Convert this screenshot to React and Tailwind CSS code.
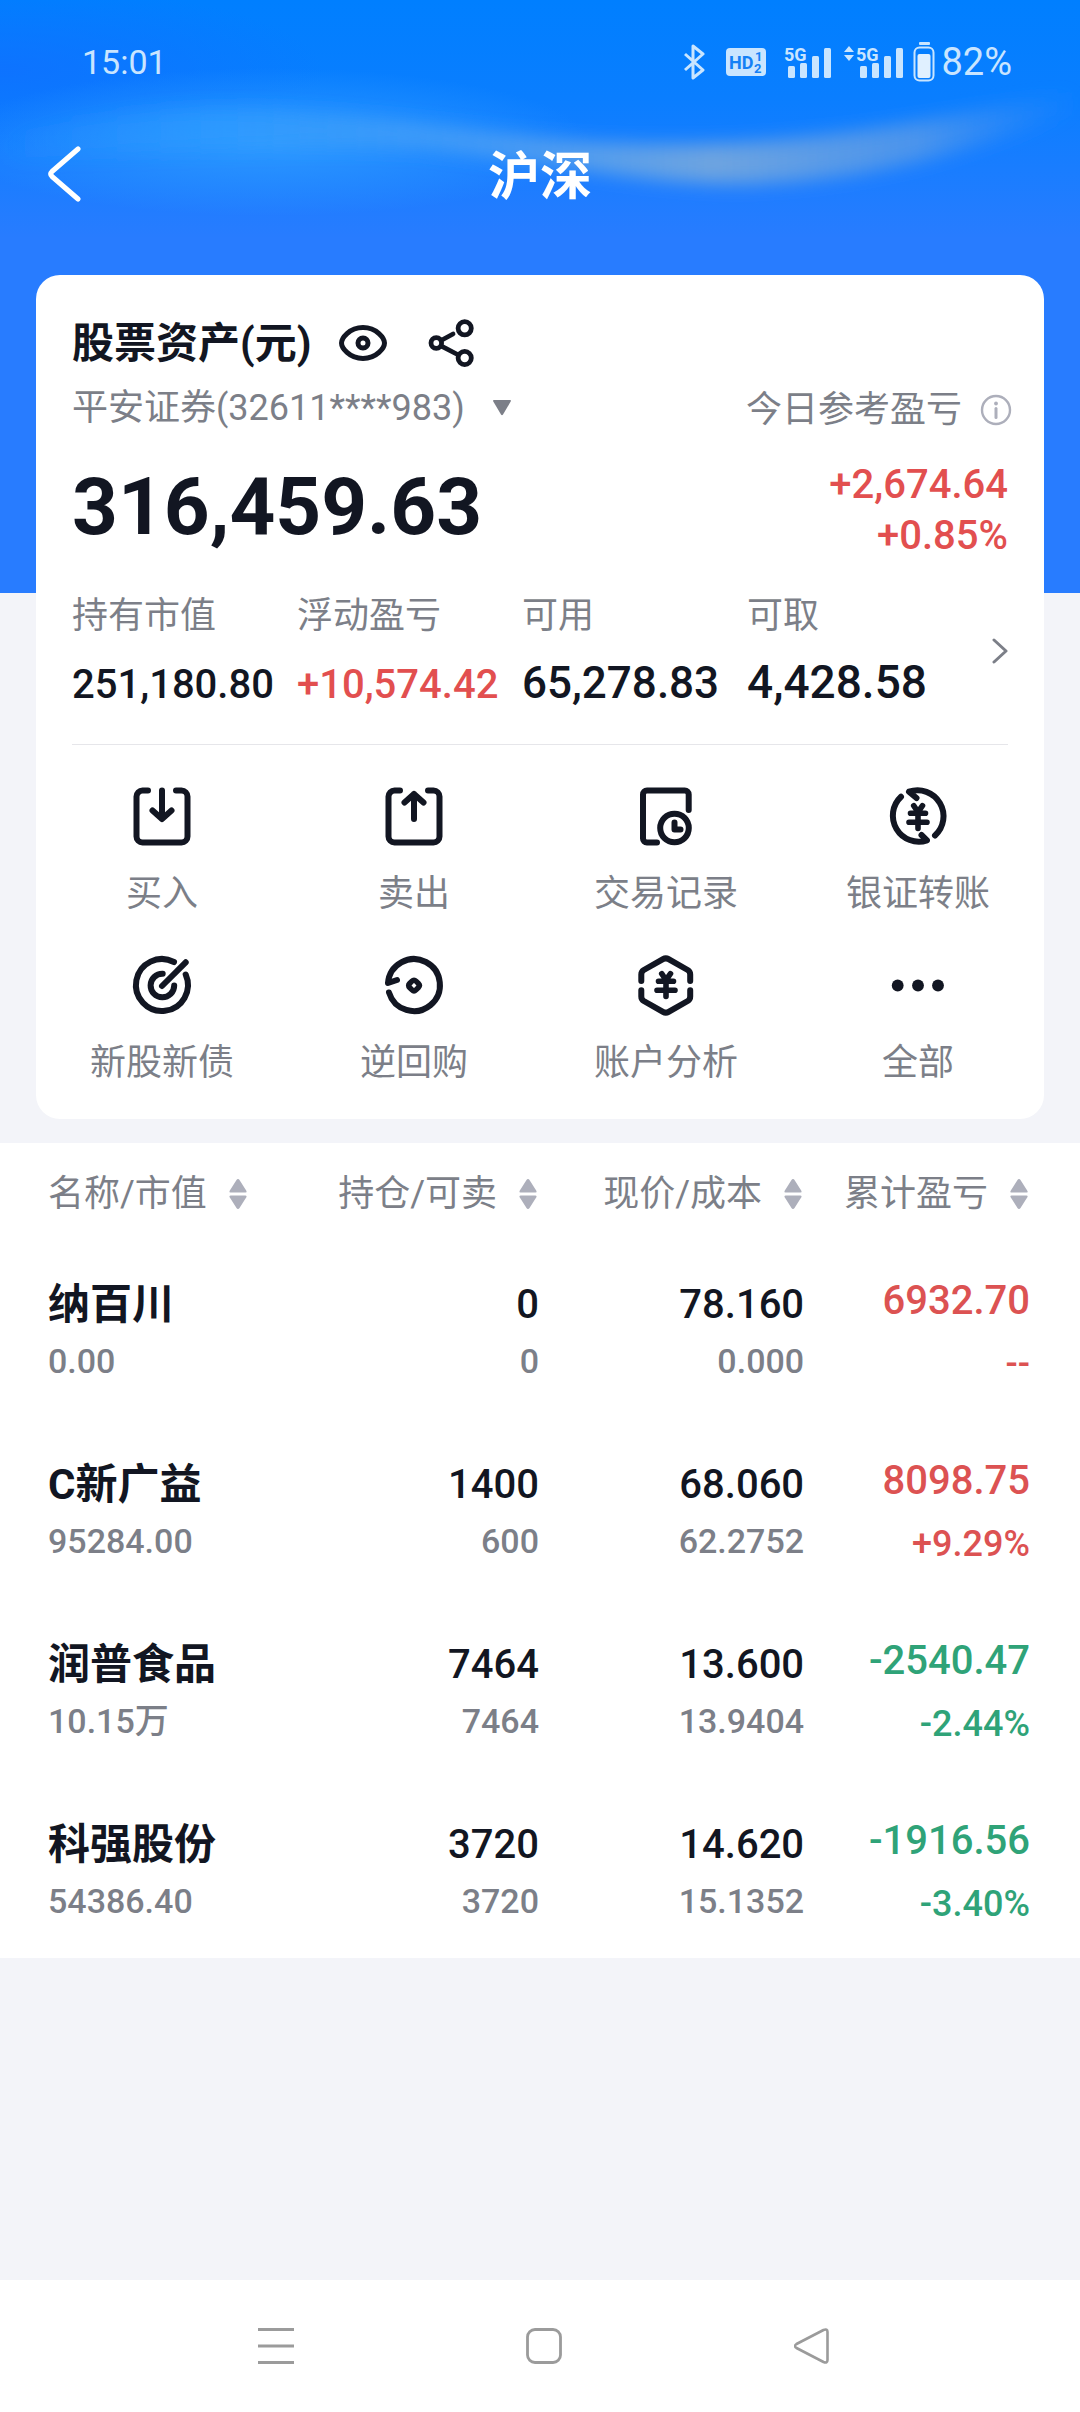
const stats = [
  { label: "持有市值", value: "251,180.80", className: "text-[40px] leading-[54px] text-[#121622]" },
  { label: "浮动盈亏", value: "+10,574.42", className: "text-[40px] leading-[54px] text-[#e24f4f]" },
  { label: "可用", value: "65,278.83", className: "text-[44px] leading-[50px] text-[#121622]" },
  { label: "可取", value: "4,428.58", className: "text-[46px] leading-[48px] text-[#121622]" },
];

const actions = [
  { label: "买入", icon: <BuyIcon /> },
  { label: "卖出", icon: <SellIcon /> },
  { label: "交易记录", icon: <RecordIcon /> },
  { label: "银证转账", icon: <TransferIcon /> },
  { label: "新股新债", icon: <TargetIcon /> },
  { label: "逆回购", icon: <RepoIcon /> },
  { label: "账户分析", icon: <AnalysisIcon /> },
  { label: "全部", icon: <MoreIcon /> },
];

const columns = [
  { label: "名称/市值", width: "w-[24%]" },
  { label: "持仓/可卖", width: "w-[26%]" },
  { label: "现价/成本", width: "w-[27%]" },
  { label: "累计盈亏", width: "w-[23%]" },
];

const holdings = [
  { name: "纳百川", value: "0.00", held: "0", sellable: "0", price: "78.160", cost: "0.000", profit: "6932.70", rate: "--", up: true },
  { name: "C新广益", value: "95284.00", held: "1400", sellable: "600", price: "68.060", cost: "62.2752", profit: "8098.75", rate: "+9.29%", up: true },
  { name: "润普食品", value: "10.15万", held: "7464", sellable: "7464", price: "13.600", cost: "13.9404", profit: "-2540.47", rate: "-2.44%", up: false },
  { name: "科强股份", value: "54386.40", held: "3720", sellable: "3720", price: "14.620", cost: "15.1352", profit: "-1916.56", rate: "-3.40%", up: false },
];

function ActionSvg({ children }) {
  return (
    <svg
      viewBox="0 0 60 60"
      className="size-[60px] overflow-visible"
      fill="none"
      stroke="#121622"
      strokeWidth="6"
      strokeLinecap="round"
      strokeLinejoin="round"
      aria-hidden="true"
    >
      {children}
    </svg>
  );
}

const trayPath = "M16 4.5H10.5a6 6 0 0 0-6 6V50.5a6 6 0 0 0 6 6H49.5a6 6 0 0 0 6-6V10.5a6 6 0 0 0-6-6H44";

function BuyIcon() {
  return (
    <ActionSvg>
      <path d={trayPath} />
      <path d="M30 4.5V32M20.5 24.5L30 33L39.5 24.5" />
    </ActionSvg>
  );
}

function SellIcon() {
  return (
    <ActionSvg>
      <path d={trayPath} />
      <path d="M30 33V8M20.5 16.5L30 8L39.5 16.5" />
    </ActionSvg>
  );
}

function RecordIcon() {
  return (
    <ActionSvg>
      <path d="M52.7 24V8.5a4 4 0 0 0-4-4H11a4 4 0 0 0-4 4V52.5a4 4 0 0 0 4 4H21" />
      <circle cx="38.5" cy="42" r="14.3" />
      <path d="M38.5 36.5V43.5H44.5" />
    </ActionSvg>
  );
}

function YenMark() {
  return <path d="M25.7 19.7L30 26L34.5 19.7M22.5 27.3H37.5M21 36.3H39M30 26V42.5" strokeWidth="5.6" />;
}

function TransferIcon() {
  return (
    <ActionSvg>
      <path d="M13 10.7A26 26 0 0 0 39 54.3L33.5 49" />
      <path d="M28.5 12L21 5.7A26 26 0 0 1 47 49.5" />
      <YenMark />
    </ActionSvg>
  );
}

function TargetIcon() {
  return (
    <ActionSvg>
      <path d="M42 7A26 26 0 1 0 53.7 19.5" />
      <path d="M30.7 18.7A11.8 11.8 0 1 0 42.2 30.5" />
      <path d="M30 31L53.7 7.3" />
    </ActionSvg>
  );
}

function RepoIcon() {
  return (
    <ActionSvg>
      <path d="M5 37.5A26 26 0 1 0 4 28L13 25" />
      <path d="M25.6 32.5Q23.6 30.5 25.6 28.5L28 26.1Q30 24.1 32 26.1L34.4 28.5Q36.400 30.5 34.4 32.5L32 34.9Q30 36.9 28 34.9Z" strokeWidth="5.4" />
    </ActionSvg>
  );
}

function AnalysisIcon() {
  return (
    <ActionSvg>
      <path d="M5.300 26V19.5q0-3 2.5-4.5L27 4.2q2.8-1.6 5.6 0L51.7 15q2.5 1.5 2.5 4.5V26" />
      <path d="M5.300 35.2V41.5q0 3 2.5 4.5L27 56.8q2.8 1.6 5.6 0L51.7 46q2.5-1.5 2.5-4.5V35.2" />
      <g transform="translate(0 -1)">
        <YenMark />
      </g>
    </ActionSvg>
  );
}

function MoreIcon() {
  return (
    <ActionSvg>
      <g fill="#121622" stroke="none">
        <circle cx="9.7" cy="30.5" r="5.9" />
        <circle cx="30" cy="30.5" r="5.9" />
        <circle cx="50" cy="30.5" r="5.9" />
      </g>
    </ActionSvg>
  );
}

function SignalBars() {
  return (
    <svg viewBox="0 0 48 36" className="h-9 w-12" fill="#c9e5ff" aria-hidden="true">
      <text x="1" y="17" fontSize="18" fontWeight="700">5G</text>
      <rect x="5" y="22" width="7" height="12" rx="1.5" />
      <rect x="17" y="19" width="7" height="15" rx="1.5" />
      <rect x="29" y="12" width="7" height="22" rx="1.5" />
      <rect x="41" y="4" width="7" height="30" rx="1.5" />
    </svg>
  );
}

function StatusBar() {
  return (
    <div className="relative flex h-[124px] items-center justify-between pr-[68px] pl-[82px] text-[#c9e5ff]">
      <span className="text-[34px]">15:01</span>
      <div className="flex items-center">
        <svg viewBox="0 0 22 36" className="h-9 w-[22px]" fill="none" stroke="#c9e5ff" strokeWidth="3" strokeLinejoin="round" aria-hidden="true">
          <path d="M2 10L20 26L10 34V2L20 10L2 26" />
        </svg>
        <svg viewBox="0 0 40 28" className="ml-[21px] h-7 w-10" aria-hidden="true">
          <rect width="40" height="28" rx="4" fill="#c9e5ff" />
          <g fill="#1480f5" fontWeight="700">
            <text x="3" y="21" fontSize="18">HD</text>
            <text x="29" y="13" fontSize="13">1</text>
            <text x="28" y="25" fontSize="13">2</text>
          </g>
        </svg>
        <div className="ml-[17px]"><SignalBars /></div>
        <svg viewBox="0 0 12 34" className="ml-3 h-[34px] w-3" fill="#c9e5ff" aria-hidden="true">
          <path d="M6 1L11 7H1ZM6 16L1 10H11Z" />
        </svg>
        <SignalBars />
        <svg viewBox="0 0 22 40" className="ml-[10px] h-10 w-[22px]" aria-hidden="true">
          <rect x="6" y="0" width="11" height="3" rx="1" fill="#c9e5ff" />
          <rect x="1.5" y="5.5" width="19" height="33" rx="5" fill="none" stroke="#c9e5ff" strokeWidth="2" />
          <rect x="4.5" y="12" width="13" height="24" rx="2" fill="#e0f0ff" />
        </svg>
        <span className="ml-[6px] text-[38px]">82%</span>
      </div>
    </div>
  );
}

function HeaderGlow() {
  return (
    <svg viewBox="0 0 1080 280" preserveAspectRatio="none" className="absolute inset-x-0 top-0 h-[280px] w-full" aria-hidden="true">
      <defs>
        <linearGradient id="sky" x1="0" y1="0" x2="0" y2="1">
          <stop offset="0" stopColor="#007fff" />
          <stop offset="0.35" stopColor="#0a7eff" />
          <stop offset="0.85" stopColor="#287cff" />
        </linearGradient>
        <radialGradient id="corner" cx="0" cy="0.25" r="0.3">
          <stop offset="0" stopColor="#0f70ff" stopOpacity="0.8" />
          <stop offset="1" stopColor="#0f70ff" stopOpacity="0" />
        </radialGradient>
        <radialGradient id="pool">
          <stop offset="0" stopColor="#2f9cff" stopOpacity="0.9" />
          <stop offset="1" stopColor="#2f9cff" stopOpacity="0" />
        </radialGradient>
        <linearGradient id="wave" x1="0" y1="0" x2="1" y2="0">
          <stop offset="0" stopColor="#2b9aff" stopOpacity="0" />
          <stop offset="0.2" stopColor="#2e9cff" stopOpacity="0.7" />
          <stop offset="0.45" stopColor="#4d9ff4" stopOpacity="0.85" />
          <stop offset="0.66" stopColor="#6ea4e0" />
          <stop offset="0.85" stopColor="#589ae8" stopOpacity="0.8" />
          <stop offset="1" stopColor="#3d90f5" stopOpacity="0" />
        </linearGradient>
        <filter id="soft" x="-20%" y="-50%" width="140%" height="200%">
          <feGaussianBlur stdDeviation="9" />
        </filter>
      </defs>
      <rect width="1080" height="280" fill="url(#sky)" />
      <rect width="1080" height="280" fill="url(#corner)" />
      <ellipse cx="270" cy="142" rx="320" ry="74" fill="url(#pool)" />
      <path
        d="M0 135C110 112 200 106 290 112C420 120 520 140 620 143C760 150 900 130 1080 88V112C960 154 860 184 730 184C620 182 540 160 420 148C300 144 120 150 0 160Z"
        fill="url(#wave)"
        filter="url(#soft)"
      />
    </svg>
  );
}

function AssetCard() {
  return (
    <section className="relative mx-9 -mt-[318px] rounded-[24px] bg-white pt-[38px] pb-8">
      <div className="px-9">
        <div className="flex h-[60px] items-center">
          <h2 className="text-[42px] font-bold text-[#121622]">股票资产(元)</h2>
          <button type="button" aria-label="隐藏金额" className="ml-7">
            <svg viewBox="0 0 48 48" className="size-12" fill="none" stroke="#121622" strokeWidth="5">
              <path d="M2.5 24C2.5 19.5 10 8.5 24 8.5S45.5 19.5 45.5 24 38 39.5 24 39.5 2.5 28.5 2.5 24Z" />
              <circle cx="24" cy="24" r="5" />
            </svg>
          </button>
          <button type="button" aria-label="分享" className="ml-10">
            <svg viewBox="0 0 48 48" className="size-12" fill="none" stroke="#121622" strokeWidth="4.8" strokeLinecap="round">
              <circle cx="9.3" cy="24" r="5.3" />
              <circle cx="37.7" cy="9.3" r="6.6" />
              <circle cx="37.7" cy="39" r="6.6" />
              <path d="M14 21.5L26 15M14 26.8L31.5 36" />
            </svg>
          </button>
        </div>

        <div className="flex h-[70px] items-center justify-between text-[36px] text-[#7c7f88]">
          <button type="button" className="flex items-center gap-7">
            平安证券(32611****983)
            <svg viewBox="0 0 18 16" className="h-4 w-[18px]" fill="#7c7f88" aria-hidden="true">
              <path d="M1 0H17Q18.5 0 17.7 1.5L10 14.5Q9 16 8 14.5L0.3 1.5Q-0.5 0 1 0Z" />
            </svg>
          </button>
          <button type="button" className="-mr-1 flex items-center gap-[18px] pt-1">
            今日参考盈亏
            <svg viewBox="0 0 32 32" className="size-8" fill="none" stroke="#adafbb" strokeWidth="2.4" strokeLinecap="round" aria-hidden="true">
              <circle cx="16" cy="16" r="14" />
              <path d="M16 14.5V23.5" strokeWidth="3" />
              <circle cx="16" cy="9.5" r="1.9" fill="#adafbb" stroke="none" />
            </svg>
          </button>
        </div>

        <div className="mt-4 flex items-start justify-between">
          <p className="text-[80px] leading-[96px] font-bold text-[#121622]">316,459.63</p>
          <div className="text-right text-[40px] leading-[51px] font-medium text-[#e24f4f]">
            <p>+2,674.64</p>
            <p>+0.85%</p>
          </div>
        </div>

        <div className="mt-7 flex items-center">
          <dl className="grid flex-1 grid-cols-4">
            {stats.map((s) => (
              <div key={s.label} className="whitespace-nowrap">
                <dt className="text-[36px] leading-[54px] text-[#7c7f88]">{s.label}</dt>
                <dd className={`mt-[15px] font-medium ${s.className}`}>{s.value}</dd>
              </div>
            ))}
          </dl>
          <button type="button" aria-label="资产详情" className="flex w-9 justify-end">
            <svg viewBox="0 0 16 28" className="h-7 w-4" fill="none" stroke="#7c7f88" strokeWidth="3" strokeLinecap="round" strokeLinejoin="round">
              <path d="M2 3L14 14L2 25" />
            </svg>
          </button>
        </div>

        <hr className="mt-8 border-[#e6e6ea]" />
      </div>

      <nav className="grid grid-cols-4 gap-y-[37px] pt-[41px]">
        {actions.map((a) => (
          <button key={a.label} type="button" className="flex flex-col items-center">
            {a.icon}
            <span className="mt-6 text-[36px] leading-[48px] text-[#7c7f88]">{a.label}</span>
          </button>
        ))}
      </nav>
    </section>
  );
}

function SortIcon() {
  return (
    <svg viewBox="0 0 18 32" className="h-8 w-[18px]" fill="#adafbb" aria-hidden="true">
      <path d="M9 1Q10 1 10.5 2L17.500 13Q18 14.5 16.5 14.5H1.5Q0 14.5 0.5 13L7.5 2Q8 1 9 1ZM9 31Q8 31 7.5 30L0.5 19Q0 17.5 1.5 17.5H16.5Q18 17.5 17.5 19L10.5 30Q10 31 9 31Z" />
    </svg>
  );
}

function NumberCell({ top, bottom }) {
  return (
    <td className="pt-10 text-right align-top font-medium">
      <div className="text-[40px] leading-[54px] text-[#121622]">{top}</div>
      <div className="text-[34px] leading-[58px] text-[#7c7f88]">{bottom}</div>
    </td>
  );
}

function HoldingsTable() {
  return (
    <section className="mt-6 bg-white pr-[50px] pl-12">
      <table className="w-full table-fixed">
        <thead>
          <tr className="h-[95px]">
            {columns.map((c, i) => (
              <th key={c.label} scope="col" className={`pt-[6px] font-normal ${c.width}`}>
                <button
                  type="button"
                  className={`flex w-full items-center gap-[22px] text-[36px] whitespace-nowrap text-[#7c7f88] ${i === 0 ? "" : "justify-end pr-[2px]"}`}
                >
                  {c.label}
                  <SortIcon />
                </button>
              </th>
            ))}
          </tr>
        </thead>
        <tbody>
          {holdings.map((h) => (
            <tr key={h.name} className="h-[180px]">
              <td className="pt-10 align-top">
                <div className="text-[42px] leading-[54px] font-bold text-[#121622]">{h.name}</div>
                <div className="text-[34px] leading-[58px] font-medium text-[#7c7f88]">{h.value}</div>
              </td>
              <NumberCell top={h.held} bottom={h.sellable} />
              <NumberCell top={h.price} bottom={h.cost} />
              <td className={`pt-9 text-right align-top font-medium ${h.up ? "text-[#dc5252]" : "text-[#2fa378]"}`}>
                <div className="text-[40px] leading-[54px]">{h.profit}</div>
                <div className="text-[36px] leading-[72px]">{h.rate}</div>
              </td>
            </tr>
          ))}
        </tbody>
      </table>
    </section>
  );
}

function SystemNav() {
  return (
    <footer className="mt-auto grid h-[132px] grid-cols-3 items-center justify-items-center bg-white pr-[134px] pl-[142px]">
      <button type="button" aria-label="最近任务">
        <svg viewBox="0 0 36 36" className="size-9" stroke="#9b9b9b" strokeWidth="3">
          <path d="M0 1.5H36M0 18H36M0 34.5H36" />
        </svg>
      </button>
      <button type="button" aria-label="主屏幕">
        <svg viewBox="0 0 36 36" className="size-9" fill="none" stroke="#9b9b9b" strokeWidth="2.8">
          <rect x="1.5" y="1.5" width="33" height="33" rx="7.5" />
        </svg>
      </button>
      <button type="button" aria-label="返回">
        <svg viewBox="0 0 36 36" className="size-9" fill="none" stroke="#9b9b9b" strokeWidth="2.6" strokeLinejoin="round">
          <path d="M29.5 2Q33.5 0.5 33.5 4V32Q33.5 35.5 29.5 34L2.5 20Q-0.5 18 2.5 16Z" />
        </svg>
      </button>
    </footer>
  );
}

export default function App() {
  return (
    <main className="flex min-h-screen flex-col bg-[#f3f4f9] font-[Roboto,'Noto_Sans_CJK_SC',sans-serif]">
      <header className="relative bg-[#287cff] pb-[369px]">
        <HeaderGlow />
        <StatusBar />
        <div className="relative grid h-[100px] grid-cols-[1fr_auto_1fr] items-center">
          <button type="button" aria-label="返回" className="ml-[46px] justify-self-start">
            <svg viewBox="0 0 36 56" className="h-14 w-9" fill="none" stroke="#ffffff" strokeWidth="5" strokeLinecap="round" strokeLinejoin="round">
              <path d="M32 3L6 25.5Q3.5 28 6 30.5L32 53" />
            </svg>
          </button>
          <h1 className="pt-2 text-[52px] font-bold text-white">沪深</h1>
        </div>
      </header>
      <AssetCard />
      <HoldingsTable />
      <SystemNav />
    </main>
  );
}
